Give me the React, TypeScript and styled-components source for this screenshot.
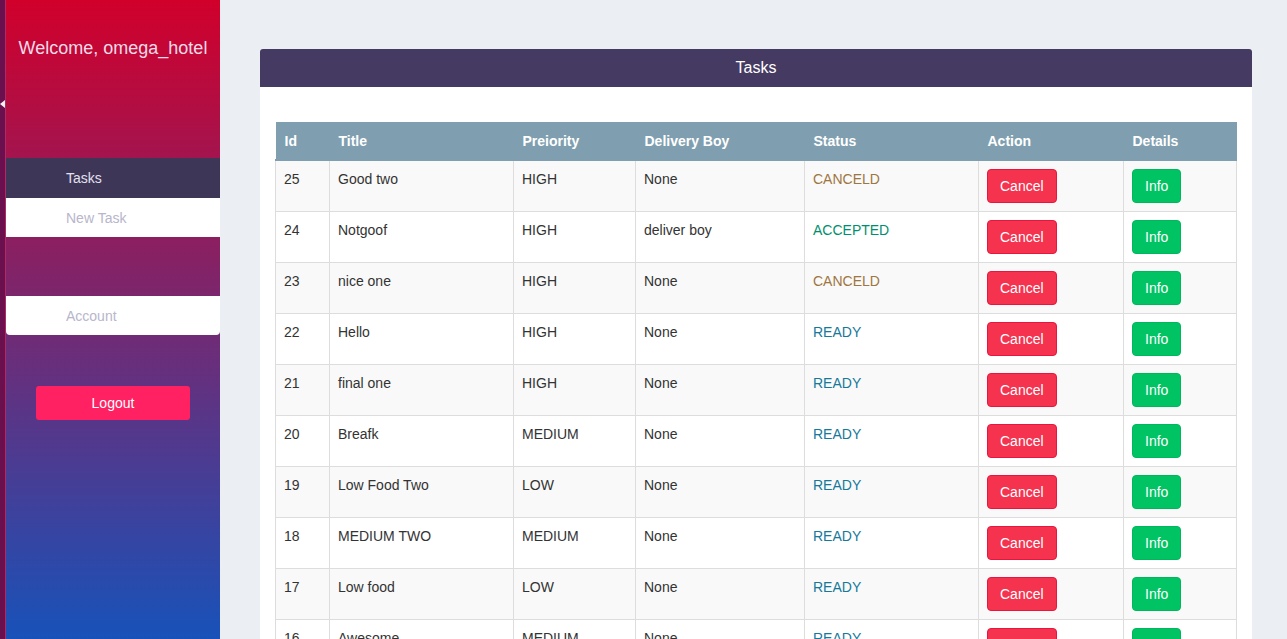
import React from "react";
import styled, { createGlobalStyle } from "styled-components";

const GlobalStyle = createGlobalStyle`
  html, body { margin: 0; padding: 0; overflow: hidden; }
  body { font-family: "Liberation Sans", Arial, sans-serif; font-size: 14px; color: #333; background: #ebeff4; }
  * { box-sizing: border-box; }
`;

const Layout = styled.div`
  display: flex;
  height: 100vh;
  width: 100%;
`;

const Strip = styled.div`
  position: relative;
  flex: 0 0 6px;
  background: #6a104e;
  border-right: 1px solid #b02a66;
`;

const StripArrow = styled.span`
  position: absolute;
  left: 0;
  top: 100px;
  width: 0;
  height: 0;
  border-top: 4px solid transparent;
  border-bottom: 4px solid transparent;
  border-right: 5px solid #f2f2f2;
`;

const Sidebar = styled.aside`
  flex: 0 0 214px;
  height: 100vh;
  display: flex;
  flex-direction: column;
  background: linear-gradient(to bottom, #d1002b 0%, #1852b9 100%);
`;

const Welcome = styled.div`
  height: 158px;
  padding-top: 37px;
  text-align: center;
  font-size: 18px;
  line-height: 22px;
  color: #f1dbe8;
`;

const MenuItem = styled.div<{ $active?: boolean; $rounded?: boolean }>`
  height: ${(p) => (p.$active ? 40 : 39)}px;
  display: flex;
  align-items: center;
  padding-left: 60px;
  font-size: 14px;
  background: ${(p) => (p.$active ? "#3e3657" : "#ffffff")};
  color: ${(p) => (p.$active ? "#e3e1ef" : "#b7b6cb")};
  border-radius: ${(p) => (p.$rounded ? "0 0 4px 4px" : "0")};
`;

const MenuGap = styled.div<{ $h: number }>`
  height: ${(p) => p.$h}px;
`;

const LogoutButton = styled.button`
  align-self: center;
  width: 154px;
  height: 34px;
  border: none;
  border-radius: 3px;
  background: #ff2161;
  color: #ffffff;
  font-family: "Liberation Sans", Arial, sans-serif;
  font-size: 14px;
  cursor: pointer;
`;

const Main = styled.main`
  flex: 1;
  padding: 49px 35px 0 40px;
  overflow: hidden;
`;

const Card = styled.section`
  background: #ffffff;
  border-radius: 3px 3px 0 0;
`;

const CardHeader = styled.div`
  height: 38px;
  display: flex;
  align-items: center;
  justify-content: center;
  background: #453a61;
  color: #ffffff;
  font-size: 16px;
  border-radius: 3px 3px 0 0;
`;

const CardBody = styled.div`
  padding: 35px 16px 0 15px;
`;

const Table = styled.table`
  width: 961px;
  table-layout: fixed;
  border-collapse: collapse;
`;

const Th = styled.th`
  background: #7f9fb0;
  color: #ffffff;
  font-weight: bold;
  text-align: left;
  padding: 9px 8px 8px 9px;
  line-height: 20px;
  border: none;
  border-bottom: 2px solid #7f9fb0;
`;

const Tr = styled.tr<{ $striped: boolean }>`
  background: ${(p) => (p.$striped ? "#f9f9f9" : "#ffffff")};
`;

const Td = styled.td`
  padding: 8px;
  line-height: 20px;
  vertical-align: top;
  border: 1px solid #dddddd;
  color: #333333;
`;

const StatusText = styled.span<{ $status: string }>`
  color: ${(p) =>
    p.$status === "CANCELD" ? "#9e7640" : p.$status === "ACCEPTED" ? "#008f6e" : "#15799a"};
`;

const Btn = styled.button<{ $variant: "cancel" | "info" }>`
  height: 34px;
  padding: 6px 12px;
  border-radius: 4px;
  font-family: "Liberation Sans", Arial, sans-serif;
  font-size: 14px;
  line-height: 20px;
  color: #ffffff;
  cursor: pointer;
  background: ${(p) => (p.$variant === "cancel" ? "#f5334f" : "#00c464")};
  border: 1px solid ${(p) => (p.$variant === "cancel" ? "#e8153e" : "#00b85c")};
`;

const rows = [
  { id: 25, title: "Good two", priority: "HIGH", boy: "None", status: "CANCELD" },
  { id: 24, title: "Notgoof", priority: "HIGH", boy: "deliver boy", status: "ACCEPTED" },
  { id: 23, title: "nice one", priority: "HIGH", boy: "None", status: "CANCELD" },
  { id: 22, title: "Hello", priority: "HIGH", boy: "None", status: "READY" },
  { id: 21, title: "final one", priority: "HIGH", boy: "None", status: "READY" },
  { id: 20, title: "Breafk", priority: "MEDIUM", boy: "None", status: "READY" },
  { id: 19, title: "Low Food Two", priority: "LOW", boy: "None", status: "READY" },
  { id: 18, title: "MEDIUM TWO", priority: "MEDIUM", boy: "None", status: "READY" },
  { id: 17, title: "Low food", priority: "LOW", boy: "None", status: "READY" },
  { id: 16, title: "Awesome", priority: "MEDIUM", boy: "None", status: "READY" },
];

const widths = [54, 184, 122, 169, 174, 145, 113];
const headers = ["Id", "Title", "Preiority", "Delivery Boy", "Status", "Action", "Details"];

export default function App() {
  return (
    <>
      <GlobalStyle />
      <Layout>
        <Strip>
          <StripArrow />
        </Strip>
        <Sidebar>
          <Welcome>Welcome, omega_hotel</Welcome>
          <MenuItem $active>Tasks</MenuItem>
          <MenuItem>New Task</MenuItem>
          <MenuGap $h={59} />
          <MenuItem $rounded>Account</MenuItem>
          <MenuGap $h={51} />
          <LogoutButton>Logout</LogoutButton>
        </Sidebar>
        <Main>
          <Card>
            <CardHeader>Tasks</CardHeader>
            <CardBody>
              <Table>
                <colgroup>
                  {widths.map((w, i) => (
                    <col key={i} style={{ width: w }} />
                  ))}
                </colgroup>
                <thead>
                  <tr>
                    {headers.map((h) => (
                      <Th key={h}>{h}</Th>
                    ))}
                  </tr>
                </thead>
                <tbody>
                  {rows.map((r, i) => (
                    <Tr key={r.id} $striped={i % 2 === 0}>
                      <Td>{r.id}</Td>
                      <Td>{r.title}</Td>
                      <Td>{r.priority}</Td>
                      <Td>{r.boy}</Td>
                      <Td>
                        <StatusText $status={r.status}>{r.status}</StatusText>
                      </Td>
                      <Td>
                        <Btn $variant="cancel">Cancel</Btn>
                      </Td>
                      <Td>
                        <Btn $variant="info">Info</Btn>
                      </Td>
                    </Tr>
                  ))}
                </tbody>
              </Table>
            </CardBody>
          </Card>
        </Main>
      </Layout>
    </>
  );
}
